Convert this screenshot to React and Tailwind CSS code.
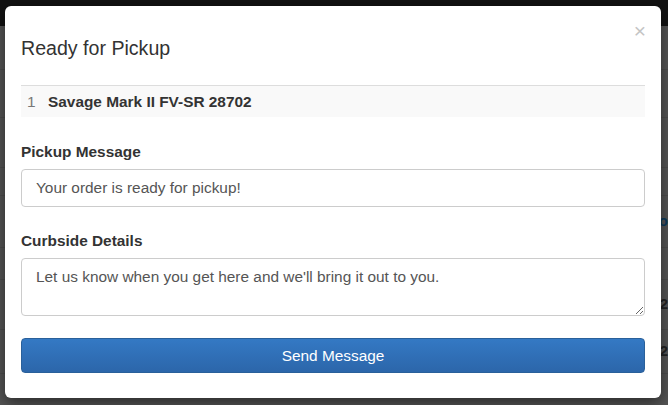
import { useState } from "react";

const bgRows = [
  { h: 44, right: "" },
  { h: 48, right: "" },
  { h: 50, right: "" },
  { h: 28, right: "" },
  { h: 52, right: "o", color: "text-[#0b3a5c]" },
  { h: 32, right: "" },
  { h: 50, right: "2", color: "text-[#222]" },
  { h: 44, right: "2", color: "text-[#222]" },
];

function BackgroundPage() {
  return (
    <div className="flex h-full flex-col bg-[#555]">
      <div className="h-[26px] shrink-0 bg-[#121212]" />
      <div className="flex-1">
        {bgRows.map((row, i) => (
          <div
            key={i}
            className="flex items-center justify-end border-b border-[#4d4d4d]"
            style={{ height: row.h }}
          >
            <span className={`text-[15px] font-bold ${row.color || ""}`}>{row.right}</span>
          </div>
        ))}
        <div className="flex">
          <div className="w-[58px] border-r border-[#4d4d4d] pl-8 text-[13px] text-[#222]">ilbt</div>
        </div>
      </div>
    </div>
  );
}

export default function App() {
  const [message, setMessage] = useState("Your order is ready for pickup!");
  const [details, setDetails] = useState(
    "Let us know when you get here and we'll bring it out to you."
  );

  return (
    <div className="relative h-[405px] w-[668px] overflow-hidden font-['Liberation_Sans',Arial,sans-serif] text-[#333]">
      <BackgroundPage />

      {/* Modal */}
      <div className="absolute left-[5px] top-[6px] w-[656px] rounded-[6px] bg-white px-4 pb-[25px] pt-[31px] shadow-[0_5px_15px_rgba(0,0,0,0.5)]">
        <button className="absolute right-[15px] top-[14px] text-[21px] font-normal leading-none text-[#c4c4c4]">
          ×
        </button>

        <h4 className="text-[19.6px] leading-[22px] text-[#333]">Ready for Pickup</h4>

        {/* Item row */}
        <div className="mt-[26px] flex h-[32px] items-center border-t border-[#ddd] bg-[#f9f9f9] text-[15.4px]">
          <span className="w-[27px] pl-[6px] text-[#777]">1</span>
          <span className="font-bold">Savage Mark II FV-SR 28702</span>
        </div>

        <label className="mt-[25px] block text-[15.4px] font-bold leading-[20px]">Pickup Message</label>
        <input
          value={message}
          onChange={(e) => setMessage(e.target.value)}
          className="mt-[7px] block h-[38px] w-full rounded-[4px] border border-[#ccc] px-[14px] text-[15.4px] text-[#555] outline-none"
        />

        <label className="mt-[24px] block text-[15.4px] font-bold leading-[20px]">Curbside Details</label>
        <textarea
          value={details}
          onChange={(e) => setDetails(e.target.value)}
          className="mt-[7px] block h-[58px] w-full rounded-[4px] border border-[#ccc] px-[14px] pt-[7px] text-[15.4px] leading-[22px] text-[#555] outline-none"
        />

        <button className="mt-[22px] block h-[35px] w-full rounded-[4px] border border-[#2a609a] bg-gradient-to-b from-[#3479c4] to-[#2c66aa] text-[15.4px] text-white">
          Send Message
        </button>
      </div>
    </div>
  );
}
